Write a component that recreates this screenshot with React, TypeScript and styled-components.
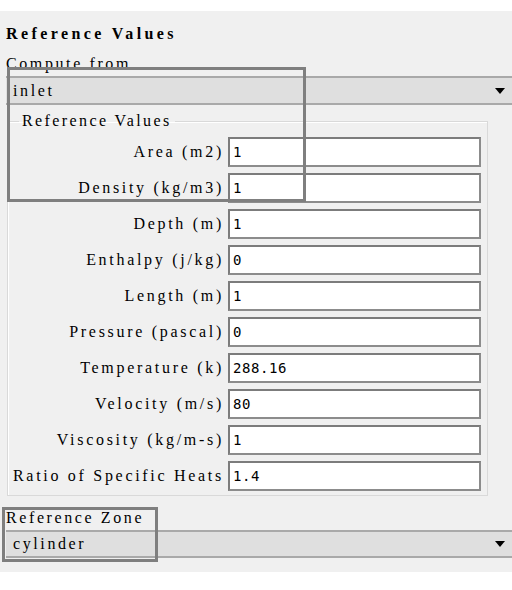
import { Fragment } from "react";
import styled, { createGlobalStyle } from "styled-components";

const fields: Array<{ label: string; value: string }> = [
  { label: "Area (m2)", value: "1" },
  { label: "Density (kg/m3)", value: "1" },
  { label: "Depth (m)", value: "1" },
  { label: "Enthalpy (j/kg)", value: "0" },
  { label: "Length (m)", value: "1" },
  { label: "Pressure (pascal)", value: "0" },
  { label: "Temperature (k)", value: "288.16" },
  { label: "Velocity (m/s)", value: "80" },
  { label: "Viscosity (kg/m-s)", value: "1" },
  { label: "Ratio of Specific Heats", value: "1.4" },
];

const GlobalStyle = createGlobalStyle`
  html, body {
    margin: 0;
    background: #ffffff;
  }
  body {
    font-family: "Liberation Serif", serif;
    color: #000;
  }
`;

const Page = styled.div`
  position: relative;
  width: 512px;
  height: 590px;
  padding-top: 11px;
  box-sizing: border-box;
`;

const Panel = styled.section`
  display: flex;
  flex-direction: column;
  background: #f0f0f0;
  padding: 14px 0 14px 6px;
`;

const Title = styled.h1`
  margin: 0;
  font: 700 16px/18px "Liberation Serif", serif;
  letter-spacing: 3.4px;
`;

const FieldLabel = styled.div<{ $gap: number }>`
  margin-top: ${({ $gap }) => $gap}px;
  font: 400 16px/16px "Liberation Serif", serif;
  letter-spacing: 2.6px;
`;

const Combo = styled.div<{ $height: number; $gap: number }>`
  display: flex;
  align-items: center;
  justify-content: space-between;
  height: ${({ $height }) => $height}px;
  margin-top: ${({ $gap }) => $gap}px;
  box-sizing: border-box;
  padding: 0 7px 0 7px;
  background: #dfdfdf;
  border-top: 2px solid #a9a9a9;
  border-bottom: 2px solid #a9a9a9;
  font: 400 16px/1 "Liberation Serif", serif;
  letter-spacing: 2.6px;
`;

const Arrow = styled.span`
  width: 0;
  height: 0;
  border-left: 5px solid transparent;
  border-right: 5px solid transparent;
  border-top: 6px solid #000;
`;

const Group = styled.fieldset`
  margin: 8px 0 0 1px;
  width: 480px;
  box-sizing: border-box;
  padding: 0 6px 4px 5px;
  border: 1px solid #d9d9d9;
  box-shadow: inset 1px 1px 0 #ffffff;
`;

const Legend = styled.legend`
  margin-left: 6px;
  padding: 0 3px;
  font: 400 16px/16px "Liberation Serif", serif;
  letter-spacing: 2.4px;
`;

const Rows = styled.div`
  display: grid;
  grid-template-columns: 1fr 253px;
  column-gap: 6px;
  row-gap: 6px;
  padding-top: 8px;
  align-items: center;
`;

const RowLabel = styled.label`
  text-align: right;
  white-space: nowrap;
  font: 400 16px/16px "Liberation Serif", serif;
  letter-spacing: 2.7px;
  margin-right: -2px;
`;

const ValueBox = styled.div`
  height: 30px;
  box-sizing: border-box;
  display: flex;
  align-items: center;
  padding-left: 3px;
  background: #ffffff;
  border: 2px solid #8c8c8c;
  border-top-color: #7c7c7c;
  border-left-color: #7c7c7c;
  font: 400 14px/1 "DejaVu Sans Mono", monospace;
  letter-spacing: 0.6px;
`;

const Marker = styled.div<{ $x: number; $y: number; $w: number; $h: number }>`
  position: absolute;
  left: ${({ $x }) => $x}px;
  top: ${({ $y }) => $y}px;
  width: ${({ $w }) => $w}px;
  height: ${({ $h }) => $h}px;
  box-sizing: border-box;
  border: 3px solid #7f7f7f;
  pointer-events: none;
`;

export default function App() {
  return (
    <Page>
      <GlobalStyle />
      <Panel>
        <Title>Reference Values</Title>
        <FieldLabel $gap={13}>Compute from</FieldLabel>
        <Combo $height={29} $gap={4}>
          <span>inlet</span>
          <Arrow />
        </Combo>
        <Group>
          <Legend>Reference Values</Legend>
          <Rows>
            {fields.map((field) => (
              <Fragment key={field.label}>
                <RowLabel>{field.label}</RowLabel>
                <ValueBox>{field.value}</ValueBox>
              </Fragment>
            ))}
          </Rows>
        </Group>
        <FieldLabel $gap={14}>Reference Zone</FieldLabel>
        <Combo $height={28} $gap={4}>
          <span>cylinder</span>
          <Arrow />
        </Combo>
      </Panel>
      <Marker $x={7} $y={67} $w={299} $h={135} />
      <Marker $x={2} $y={507} $w={156} $h={55} />
    </Page>
  );
}
